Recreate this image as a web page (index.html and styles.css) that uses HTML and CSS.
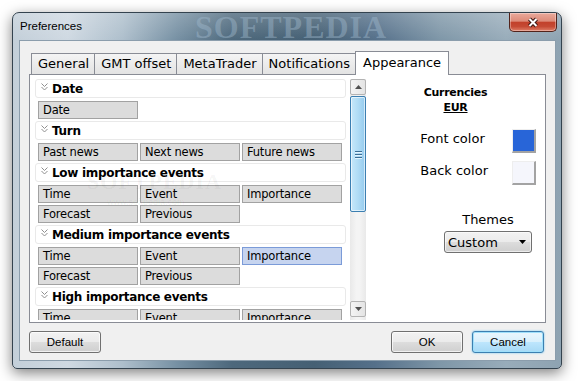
FILE: index.html
```html
<!DOCTYPE html>
<html lang="en">
<head>
    <meta charset="UTF-8">
    <title>Preferences</title>
    <link rel="stylesheet" href="styles.css">
</head>
<body>
    <div class="window">
        <div class="titlebar">
            <span class="title">Preferences</span>
            <span class="title-mark">SOFTPEDIA</span>
            <div class="close">
                <svg width="14" height="11" viewBox="0 0 14 11"><path class="x-edge" d="M3.5 2L10.5 9M10.5 2L3.5 9"/><path class="x-face" d="M3.5 2L10.5 9M10.5 2L3.5 9"/></svg>
            </div>
        </div>
        <div class="client">
            <div class="tabs">
                <div class="tab">General</div>
                <div class="tab">GMT offset</div>
                <div class="tab">MetaTrader</div>
                <div class="tab">Notifications</div>
                <div class="tab active">Appearance</div>
            </div>
            <div class="panel">
                <div class="list">
                    <div class="rows">
                        <div class="group"><svg class="chev" width="7" height="8" viewBox="0 0 7 8"><path d="M.5 .5L3.5 3.5L6.5 .5M.5 4L3.5 7L6.5 4"/></svg>Date</div>
                        <div class="cells"><span class="cell">Date</span></div>
                        <div class="group"><svg class="chev" width="7" height="8" viewBox="0 0 7 8"><path d="M.5 .5L3.5 3.5L6.5 .5M.5 4L3.5 7L6.5 4"/></svg>Turn</div>
                        <div class="cells"><span class="cell">Past news</span><span class="cell">Next news</span><span class="cell">Future news</span></div>
                        <div class="group"><svg class="chev" width="7" height="8" viewBox="0 0 7 8"><path d="M.5 .5L3.5 3.5L6.5 .5M.5 4L3.5 7L6.5 4"/></svg>Low importance events</div>
                        <div class="cells"><span class="cell">Time</span><span class="cell">Event</span><span class="cell">Importance</span></div>
                        <div class="cells"><span class="cell">Forecast</span><span class="cell">Previous</span></div>
                        <div class="group"><svg class="chev" width="7" height="8" viewBox="0 0 7 8"><path d="M.5 .5L3.5 3.5L6.5 .5M.5 4L3.5 7L6.5 4"/></svg>Medium importance events</div>
                        <div class="cells"><span class="cell">Time</span><span class="cell">Event</span><span class="cell selected">Importance</span></div>
                        <div class="cells"><span class="cell">Forecast</span><span class="cell">Previous</span></div>
                        <div class="group"><svg class="chev" width="7" height="8" viewBox="0 0 7 8"><path d="M.5 .5L3.5 3.5L6.5 .5M.5 4L3.5 7L6.5 4"/></svg>High importance events</div>
                        <div class="cells"><span class="cell">Time</span><span class="cell">Event</span><span class="cell">Importance</span></div>
                        <div class="cells"><span class="cell">Forecast</span><span class="cell">Previous</span></div>
                        <span class="list-mark">SOFTPEDIA<small>www.softpedia.com</small></span>
                    </div>
                    <div class="scrollbar">
                        <div class="sb-btn"><svg width="7" height="4" viewBox="0 0 7 4"><path d="M0 4L3.5 0L7 4Z"/></svg></div>
                        <div class="thumb"><span></span><span></span><span></span></div>
                        <div class="track"></div>
                        <div class="sb-btn"><svg width="7" height="4" viewBox="0 0 7 4"><path d="M0 0L3.5 4L7 0Z"/></svg></div>
                    </div>
                </div>
                <div class="appearance">
                    <div class="currencies"><b>Currencies</b><u>EUR</u></div>
                    <div class="colors">
                        <span>Font color</span><span class="swatch font-swatch"></span>
                        <span>Back color</span><span class="swatch back-swatch"></span>
                    </div>
                    <div class="themes">
                        <span>Themes</span>
                        <div class="combo">Custom<svg width="7" height="4" viewBox="0 0 7 4"><path d="M0 0L3.5 4L7 0Z"/></svg></div>
                    </div>
                </div>
            </div>
            <div class="buttons">
                <button class="btn">Default</button>
                <div class="btn-group">
                    <button class="btn">OK</button>
                    <button class="btn focused">Cancel</button>
                </div>
            </div>
        </div>
    </div>
</body>
</html>
```

FILE: styles.css
```css
body { margin: 0; padding: 12px; background: #fff; font-family: "DejaVu Sans", sans-serif; color: #000; }

.window { width: 550px; height: 357px; box-sizing: border-box; display: flex; flex-direction: column; border: 1px solid #34434f; border-radius: 7px 7px 5px 5px; box-shadow: 0 4px 14px rgba(0,0,0,0.5);
    background: linear-gradient(180deg, rgba(255,255,255,0.2), rgba(255,255,255,0) 27px),
                linear-gradient(90deg, #c3cfd9 0%, #cfd9e2 10%, #aebfcc 20%, #7690a3 30%, #4d687c 40%, #456074 55%, #55708a 66%, #7f97a8 78%, #98acba 90%, #8ea3b2 100%); }

.titlebar { height: 27px; display: flex; justify-content: space-between; padding-left: 7px; position: relative; }
.title { font: 11.5px/27px "Liberation Sans", sans-serif; }
.title-mark { position: absolute; left: 182px; top: -4px; font: bold 32px "Liberation Serif", serif; letter-spacing: 1px; color: rgba(160,185,205,0.45); }
.close { width: 48px; height: 19px; box-sizing: border-box; margin-right: 4px; display: flex; align-items: center; justify-content: center; border: 1px solid #52231b; border-top: none; border-radius: 0 0 5px 5px;
    background: linear-gradient(#eaa99b 0%, #dd8b79 45%, #c2412b 52%, #c54a34 75%, #df7f68 100%); box-shadow: inset 0 0 0 1px rgba(255,255,255,0.35); }
.x-edge { stroke: #3d1712; stroke-width: 4; fill: none; }
.x-face { stroke: #fff; stroke-width: 2; fill: none; }

.client { margin: 0 5px 0 6px; height: 321px; box-sizing: border-box; display: flex; flex-direction: column; border: 1px solid #8b9dac; background: #f0f0f0; padding: 10px 9px 7px 9px; }

.tabs { display: flex; align-items: flex-end; height: 23px; padding-left: 2px; position: relative; z-index: 1; }
.tab { height: 21px; box-sizing: border-box; padding: 0 5px 0 6px; margin-right: -1px; border: 1px solid #898c95; border-bottom: none; background: linear-gradient(#f4f4f4, #e3e3e3); font-size: 13px; line-height: 20px; }
.tab.active { height: 24px; margin-bottom: -1px; padding: 0 7px; background: #fff; line-height: 22px; }

.panel { height: 249px; box-sizing: border-box; display: flex; border: 1px solid #898c95; background: #fff; padding: 4px 0 0 5px; }
.list { width: 331px; height: 241px; display: flex; gap: 4px; }
.rows { width: 311px; overflow: hidden; position: relative; }
.group { height: 19px; box-sizing: border-box; margin-bottom: 3px; display: flex; align-items: center; gap: 4px; padding-left: 5px; border: 1px solid #e9e9e9; border-radius: 3px; font-weight: bold; font-size: 12px; letter-spacing: -0.3px; }
.chev { margin-top: -4px; }
.chev path { fill: none; stroke: #8f8f8f; stroke-width: 1; }
.cells { display: flex; gap: 2px; padding-left: 3px; margin-bottom: 2px; }
.cell { width: 100px; height: 18px; box-sizing: border-box; padding-left: 4px; border: 1px solid #a2a2a2; background: #dcdcdc; font-size: 11.5px; line-height: 16px; letter-spacing: -0.2px; }
.cell.selected { background: #c6d4ef; border-color: #7b9bd8; }
.list-mark { position: absolute; left: 52px; top: 92px; font: bold 22px/22px "Liberation Serif", serif; color: rgba(0,0,0,0.05); letter-spacing: 1px; }
.list-mark small { display: block; margin: 4px 0 0 20px; font: 9px "Liberation Sans", sans-serif; letter-spacing: 0; }

.scrollbar { width: 16px; display: flex; flex-direction: column; background: linear-gradient(90deg, #e9e9e9, #f4f4f4 40%, #f4f4f4 60%, #e9e9e9); }
.sb-btn { height: 16px; box-sizing: border-box; display: flex; align-items: center; justify-content: center; border: 1px solid #b3b3b3; border-radius: 2px; background: linear-gradient(90deg, #f4f4f4, #e4e4e4); }
.sb-btn:last-child { margin-bottom: 3px; }
.sb-btn path { fill: #505050; }
.thumb { height: 116px; margin-top: 1px; box-sizing: border-box; display: flex; flex-direction: column; align-items: center; justify-content: center; gap: 2px; border: 1px solid #3c7fb1; border-radius: 2px;
    background: linear-gradient(90deg, #c6e8fa, #b0dcf5 50%, #95cbee); box-shadow: inset 0 0 0 1px rgba(255,255,255,0.6); }
.thumb span { width: 7px; height: 1px; background: #3a6e96; box-shadow: 0 1px 0 #e3f3fd; }
.track { flex: 1; }

.appearance { flex: 1; display: flex; flex-direction: column; padding-top: 6px; font-size: 13px; }
.currencies { display: flex; flex-direction: column; align-items: center; font-weight: bold; font-size: 11px; line-height: 15px; letter-spacing: -0.3px; }
.colors { display: grid; grid-template-columns: auto 24px; column-gap: 24px; row-gap: 8px; justify-content: end; align-items: start; margin-top: 14px; padding-right: 9px; line-height: 20px; }
.swatch { height: 24px; box-sizing: border-box; border-style: solid; border-width: 1px 2px 2px 1px; border-color: #eeeeee #a3a3a3 #a3a3a3 #eeeeee; }
.font-swatch { background: #2865d8; }
.back-swatch { background: #f5f6fc; }
.themes { align-self: flex-end; display: flex; flex-direction: column; align-items: center; gap: 4px; margin-top: 27px; padding-right: 13px; line-height: 15px; }
.combo { width: 88px; height: 22px; box-sizing: border-box; display: flex; align-items: center; justify-content: space-between; padding: 0 5px 0 3px; border: 1px solid #707070; border-radius: 3px;
    background: linear-gradient(#f2f2f2 0%, #ebebeb 49%, #dddddd 50%, #cfcfcf 100%); box-shadow: inset 0 0 0 1px rgba(255,255,255,0.6); }
.combo path { fill: #000; }

.buttons { display: flex; justify-content: space-between; margin-top: 8px; }
.btn-group { display: flex; gap: 9px; margin-right: 2px; }
.btn { width: 72px; height: 22px; padding: 0; border: 1px solid #707070; border-radius: 3px; font: 11.5px "Liberation Sans", sans-serif; color: #000;
    background: linear-gradient(#f2f2f2 0%, #ebebeb 49%, #dddddd 50%, #cfcfcf 100%); box-shadow: inset 0 0 0 1px rgba(255,255,255,0.7); }
.btn.focused { border-color: #3c7fb1; background: linear-gradient(#eaf6fd 0%, #d9f0fc 49%, #bee6fd 50%, #a7d9f5 100%); box-shadow: inset 0 0 0 1px #9fe0fb, 0 0 2px #5fc0f0; }
```
